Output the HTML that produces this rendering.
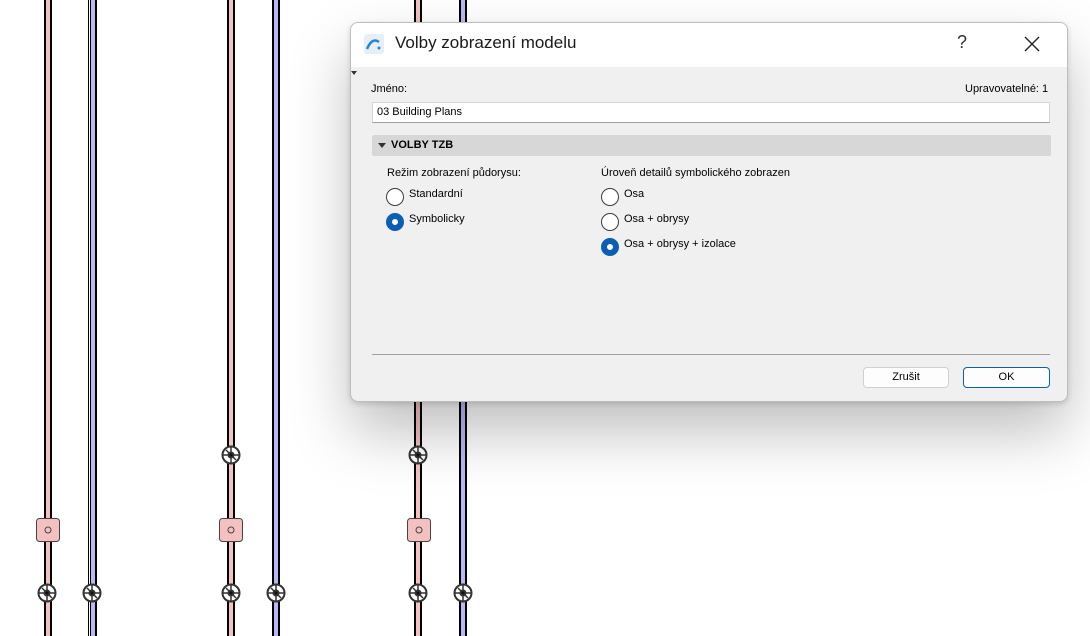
<!DOCTYPE html>
<html><head><meta charset="utf-8"><style>
html,body{margin:0;padding:0;width:1090px;height:636px;overflow:hidden;background:#fff;font-family:"Segoe UI","Liberation Sans",sans-serif;}
svg.bg{position:absolute;left:0;top:0}
.dlg{position:absolute;left:350px;top:22px;width:716px;height:378px;background:#f0f0f0;border:1px solid #bdbdbd;border-radius:8px;box-shadow:0 30px 60px rgba(0,0,0,.25),0 2px 6px rgba(0,0,0,.15);overflow:hidden;font-size:11px;color:#000}
.tb{position:absolute;left:0;top:0;width:716px;height:44px;background:#fff}
.title{position:absolute;left:44px;top:10px;font-size:17px;color:#1a1a1a}
.q{position:absolute;left:606px;top:9px;font-size:18px;color:#333}
.x{position:absolute;left:672px;top:12px}
.lbl{position:absolute;font-size:11px}
.inp{position:absolute;left:21px;top:79px;width:678px;height:21px;background:#fff;border:1px solid #d6d6d6;border-bottom-color:#a0a0a0;box-sizing:border-box}
.inp span{position:absolute;left:4px;top:3px}
.sec{position:absolute;left:21px;top:112px;width:679px;height:21px;background:#d7d7d7;border-radius:2px}
.sec b{position:absolute;left:19px;top:4px;font-size:11px}
.rad{position:absolute;width:18px;height:18px;border:1px solid #3c3c3c;border-radius:50%;background:#fff;box-sizing:border-box}
.rad.on{border:6px solid #0a5fb4;background:#fff}
.line{position:absolute;left:21px;top:331px;width:678px;height:1px;background:#a0a0a0}
.btn{position:absolute;top:344px;width:86px;height:21px;box-sizing:border-box;border:1px solid #d0d0d0;border-radius:4px;background:#fdfdfd;text-align:center;line-height:19px}
</style></head><body>
<svg class="bg" width="1090" height="636" xmlns="http://www.w3.org/2000/svg">
<defs>
<g id="v" fill="#fff" stroke="#333" stroke-width="2"><circle cx="0" cy="0" r="8.5"/><path d="M0-8V8M-8 0H8M-5-5L5 5" stroke-width="1.5"/><circle r="2.5" fill="#111"/></g>
</defs>
<g fill="#f4c0c0">
<rect x="44" y="0" width="8" height="636" fill="#000"/><rect x="46" y="0" width="4" height="636"/>
<rect x="227" y="0" width="8" height="636" fill="#000"/><rect x="229" y="0" width="4" height="636"/>
<rect x="414" y="0" width="8" height="636" fill="#000"/><rect x="416" y="0" width="4" height="636"/>
</g>
<g fill="#b8b8f4">
<rect x="88" y="0" width="1" height="636" fill="#000"/><rect x="90" y="0" width="7" height="636" fill="#000"/><rect x="91" y="0" width="4" height="636"/>
<rect x="272" y="0" width="1" height="636" fill="#000"/><rect x="273" y="0" width="7" height="636" fill="#000"/><rect x="274" y="0" width="4" height="636"/>
<rect x="459" y="0" width="1" height="636" fill="#000"/><rect x="460" y="0" width="7" height="636" fill="#000"/><rect x="461" y="0" width="4" height="636"/>
</g>
<g fill="#f4c0c0" stroke="#444" stroke-width="1">
<rect x="36.5" y="518.5" width="23" height="23" rx="3"/><circle cx="48" cy="530" r="3" fill="none"/>
<rect x="219.5" y="518.5" width="23" height="23" rx="3"/><circle cx="231" cy="530" r="3" fill="none"/>
<rect x="407.5" y="518.5" width="23" height="23" rx="3"/><circle cx="419" cy="530" r="3" fill="none"/>
</g>
<use href="#v" x="231" y="455"/><use href="#v" x="418" y="455"/>
<use href="#v" x="47" y="593"/><use href="#v" x="92" y="593"/><use href="#v" x="231" y="593"/><use href="#v" x="276" y="593"/><use href="#v" x="418" y="593"/><use href="#v" x="463" y="593"/>
</svg>
<div class="dlg">
<div class="tb">
<svg style="position:absolute;left:13px;top:11px" width="20" height="20"><rect width="20" height="20" rx="3" fill="#e8eef4"/><path d="M3 15 Q8 3 15 8" stroke="#1e8ad6" stroke-width="2.5" fill="none"/><circle cx="15" cy="14" r="1.5" fill="#1e8ad6"/></svg>
<div class="title">Volby zobrazení modelu</div>
<div class="q">?</div>
<svg class="x" width="18" height="18"><path d="M2 2L16 16M16 2L2 16" stroke="#222" stroke-width="1.4"/></svg>
</div>
<svg style="position:absolute;left:0;top:48px" width="6" height="5"><path d="M0 0H6L3 4Z" fill="#333"/></svg>
<div class="lbl" style="left:20px;top:60px">Jméno:</div>
<div class="lbl" style="left:614px;top:60px">Upravovatelné: 1</div>
<div class="inp"><span>03 Building Plans</span></div>
<div class="sec"><svg style="position:absolute;left:6px;top:8px" width="8" height="5"><path d="M0 0H8L4 5Z" fill="#333"/></svg><b>VOLBY TZB</b></div>
<div class="lbl" style="left:36px;top:144px">Režim zobrazení půdorysu:</div>
<div class="rad" style="left:35px;top:165px"></div><div class="lbl" style="left:58px;top:165px">Standardní</div>
<div class="rad on" style="left:35px;top:190px"></div><div class="lbl" style="left:58px;top:190px">Symbolicky</div>
<div class="lbl" style="left:250px;top:144px">Úroveň detailů symbolického zobrazen</div>
<div class="rad" style="left:250px;top:165px"></div><div class="lbl" style="left:273px;top:165px">Osa</div>
<div class="rad" style="left:250px;top:190px"></div><div class="lbl" style="left:273px;top:190px">Osa + obrysy</div>
<div class="rad on" style="left:250px;top:215px"></div><div class="lbl" style="left:273px;top:215px">Osa + obrysy + izolace</div>
<div class="line"></div>
<div class="btn" style="left:512px">Zrušit</div>
<div class="btn" style="left:612px;width:87px;border-color:#0a5fb4">OK</div>
</div>
</body></html>
